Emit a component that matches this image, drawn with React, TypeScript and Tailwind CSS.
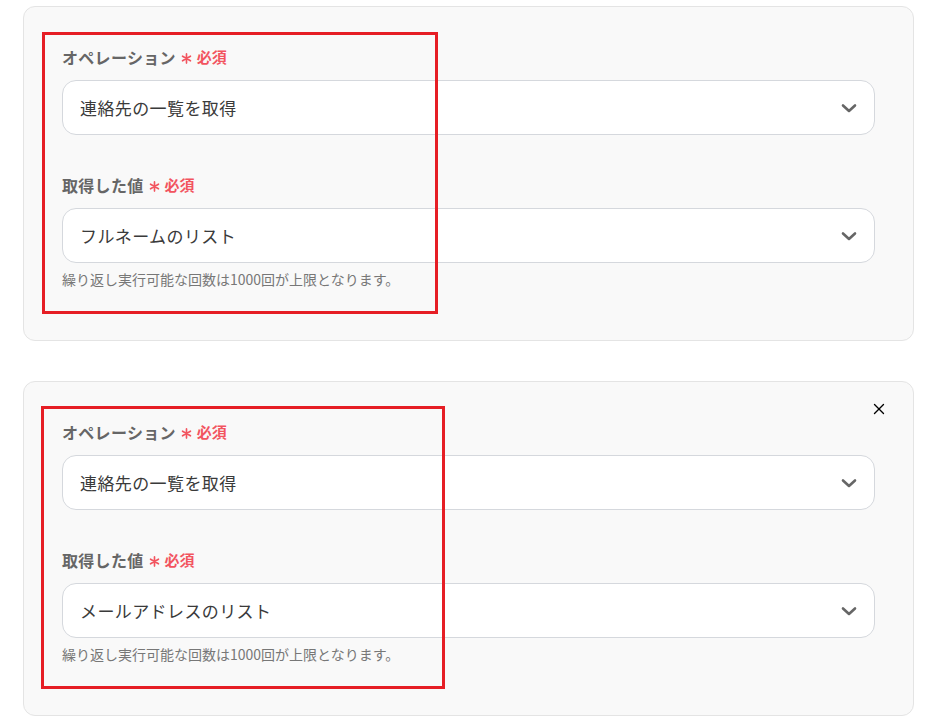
import { X } from 'lucide-react';

const font = { fontFamily: '"Noto Sans CJK JP", "Noto Sans", sans-serif' };

function Label({ text }: { text: string }) {
  return (
    <div className="flex h-6 items-center">
      <span className="text-[16px] font-bold tracking-[0.3px] text-[#666]">{text}</span>
      <svg className="ml-[5px] mt-[3px] h-[11px] w-[11px]" viewBox="0 0 12 12" fill="none" stroke="#f2545f" strokeWidth={1.8} strokeLinecap="round">
        <path d="M6 1v10M1.7 3.5l8.6 5M1.7 8.5l8.6-5" />
      </svg>
      <span className="ml-[5px] text-[15px] font-bold text-[#f2545f]">必須</span>
    </div>
  );
}

function Select({ value }: { value: string }) {
  return (
    <div className="mt-[11px] flex h-[55px] items-center justify-between rounded-[14px] border border-[#d5d8dd] bg-white pl-[17px] pr-[17px]">
      <span className="text-[17px] tracking-[0.4px] text-[#3a3a3a]">{value}</span>
      <svg className="h-[10px] w-[16px]" viewBox="0 0 16 10" fill="none" stroke="#666" strokeWidth={2.6} strokeLinecap="round" strokeLinejoin="round">
        <path d="M2 2.5l6 5.5 6-5.5" />
      </svg>
    </div>
  );
}

function Card({ second, box }: { second: string; box: string }) {
  return (
    <div className="relative rounded-[12px] border border-[#e4e4e4] bg-[#f9f9f9] px-[38px] pb-[50px] pt-[38px]">
      <Label text="オペレーション" />
      <Select value="連絡先の一覧を取得" />
      <div className="mt-[38px]">
        <Label text="取得した値" />
        <Select value={second} />
      </div>
      <p className="mt-[6px] text-[14px] text-[#777]">繰り返し実行可能な回数は1000回が上限となります。</p>
      <div className={`pointer-events-none absolute border-[3px] border-[#e61e25] ${box}`} />
    </div>
  );
}

export default function App() {
  return (
    <div className="min-h-screen bg-white pl-[23px] pr-[12px] pt-[6px]" style={font}>
      <Card second="フルネームのリスト" box="left-[18px] top-[25px] h-[282px] w-[396px]" />
      <div className="relative mt-[40px]">
        <Card second="メールアドレスのリスト" box="left-[17px] top-[24px] h-[283px] w-[404px]" />
        <button className="absolute right-[26px] top-[19px] text-black">
          <X className="h-[18px] w-[18px]" strokeWidth={1.8} />
        </button>
      </div>
    </div>
  );
}
